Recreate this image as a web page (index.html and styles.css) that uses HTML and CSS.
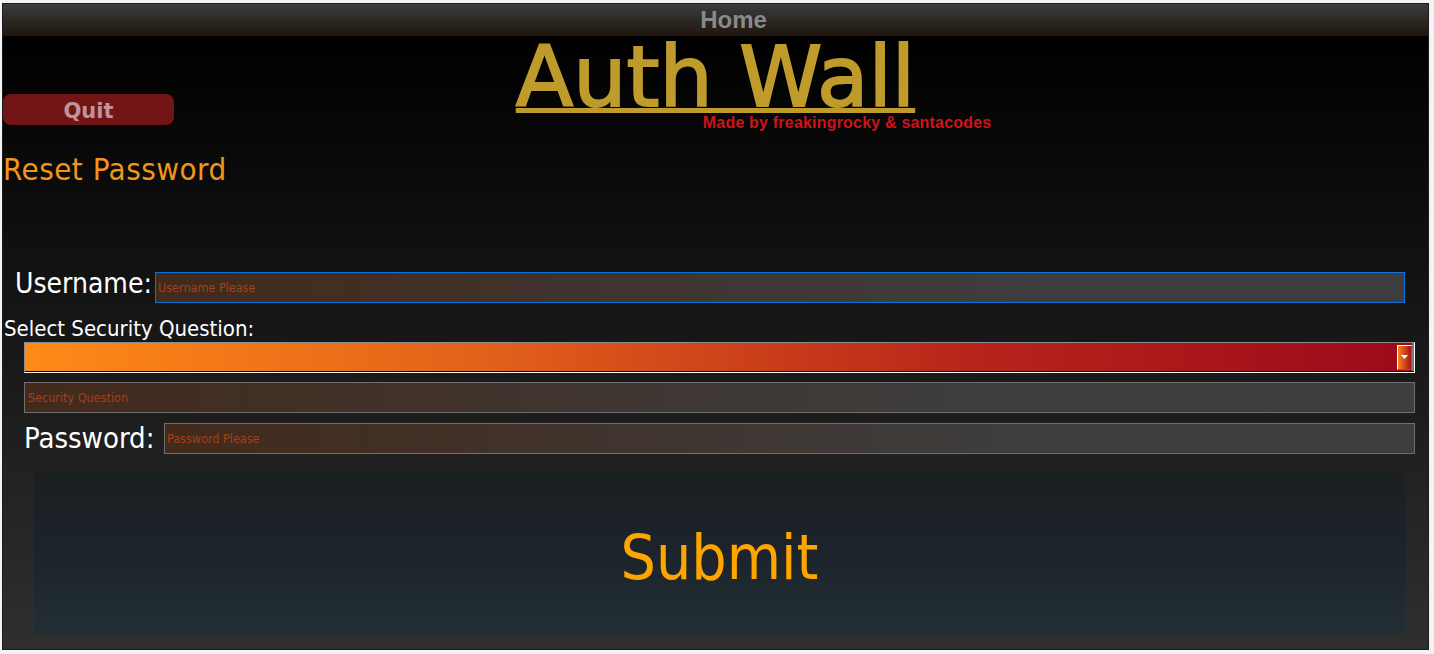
FILE: index.html
```html
<!DOCTYPE html>
<html lang="en">
<head>
<meta charset="utf-8">
<title>Auth Wall</title>
<link rel="stylesheet" href="styles.css">
</head>
<body>
<div class="window">
  <header class="titlebar">Home</header>
  <main class="main">
    <div class="top">
      <button class="quit" type="button">Quit</button>
      <h1 class="title">Auth Wall</h1>
      <p class="credit">Made by freakingrocky &amp; santacodes</p>
    </div>
    <h2 class="heading">Reset Password</h2>
    <form class="form">
      <div class="row row-user">
        <label class="label" for="user">Username:</label>
        <input id="user" class="field field-focus" placeholder="Username Please">
      </div>
      <label class="select-label">Select Security Question:</label>
      <div class="combo">
        <div class="combo-btn">
          <svg width="7" height="5" viewBox="0 0 7 5"><polygon points="0,0 7,0 3.5,4" fill="#fff"/></svg>
        </div>
      </div>
      <input class="field field-sq" placeholder="Security Question">
      <div class="row row-pass">
        <label class="label" for="pass">Password:</label>
        <input id="pass" class="field" type="password" placeholder="Password Please">
      </div>
      <button class="submit" type="button">Submit</button>
    </form>
  </main>
</div>
</body>
</html>
```

FILE: styles.css
```css
html, body {
  margin: 0;
}
body {
  background: #f3f3f3;
  padding: 3px 0 0 2px;
  height: 654px;
  box-sizing: border-box;
  overflow: hidden;
}
.window {
  width: 1427px;
  height: 647px;
  box-sizing: border-box;
  border: 1px solid #1c1c1c;
  display: flex;
  flex-direction: column;
}
.titlebar {
  flex: none;
  height: 32px;
  background: linear-gradient(#3c3c3c, #1f150d);
  text-align: center;
  padding-left: 36px;
  font: bold 24px/32px "Liberation Sans", Arial, sans-serif;
  color: #8a8a8a;
}
.main {
  flex: 1;
  background: linear-gradient(#000000, #2f2f2f);
  display: flex;
  flex-direction: column;
  font-family: "DejaVu Sans Condensed", "DejaVu Sans", sans-serif;
  font-stretch: condensed;
}
.top {
  display: grid;
  grid-template-columns: 1fr auto 1fr;
}
.quit {
  grid-column: 1;
  grid-row: 1 / span 2;
  justify-self: start;
  align-self: start;
  margin-top: 58px;
  width: 171px;
  height: 31px;
  padding: 0;
  border: 0;
  border-radius: 8px;
  background: #731515;
  color: #c0939a;
  font: bold 21px/34px "DejaVu Sans", sans-serif;
}
.title {
  grid-column: 2;
  grid-row: 1;
  margin: 3px 0 0;
  font: normal 84px/76px "DejaVu Sans", sans-serif;
  color: #bf9b2b;
  -webkit-text-stroke: 2px #bf9b2b;
  text-decoration: underline;
  text-decoration-thickness: 5px;
  text-underline-offset: 2px;
}
.credit {
  grid-column: 2 / 4;
  grid-row: 2;
  margin: -1px 0 0;
  padding-left: 187px;
  font: bold 16px/18px "Liberation Sans", Arial, sans-serif;
  color: #cc1418;
  white-space: nowrap;
  letter-spacing: 0.2px;
}
.heading {
  margin: 20px 0 0;
  font-size: 31px;
  line-height: 34px;
  letter-spacing: 0.5px;
  font-weight: normal;
  color: #f3951a;
}
.form {
  display: flex;
  flex-direction: column;
  margin-top: 86px;
}
.row {
  display: flex;
}
.label {
  flex: none;
  width: 140px;
  color: #ffffff;
  font-size: 28px;
}
.row-user {
  align-items: flex-start;
  padding-left: 12px;
  margin-right: 23px;
}
.row-user .label {
  line-height: 23px;
}
.row-pass {
  align-items: center;
  margin: 9px 13px 0 21px;
}
.row-pass .label {
  line-height: 32px;
  font-size: 29px;
}
.field {
  flex: 1;
  min-width: 0;
  box-sizing: border-box;
  height: 31px;
  margin: 0;
  padding: 0 2px;
  border: 1px solid #6f6f6f;
  background: linear-gradient(to right, #432a1b 0%, #3f3530 40%, #3e3e3e 70%);
  font-family: "DejaVu Sans Condensed", "DejaVu Sans", sans-serif;
  font-stretch: condensed;
  font-size: 12.5px;
  color: #dddddd;
  outline: none;
}
.field::placeholder {
  color: #a3411b;
  opacity: 1;
}
.field-focus {
  border-color: #0a74da;
}
.field-sq {
  flex: none;
  margin: 9px 13px 0 21px;
  padding-left: 3px;
}
.select-label {
  margin-top: 13px;
  padding-left: 1px;
  font-size: 22px;
  line-height: 25px;
  color: #ffffff;
}
.combo {
  margin: 1px 13px 0 21px;
  height: 31px;
  box-sizing: border-box;
  display: flex;
  justify-content: flex-end;
  align-items: center;
  padding: 0 2px 1px 0;
  border: 1px solid;
  border-color: #8c8c8c #ffffff #ffffff #8c8c8c;
  background: linear-gradient(to right, #ff8a17 0%, #e2611a 33%, #b8241a 68%, #9b0a1a 100%);
  box-shadow: inset 0 -1px 0 #000000, inset -2px 0 0 #7a7a7a;
}
.combo-btn {
  width: 13px;
  height: 23px;
  border: 1px solid;
  border-color: #ffffff #6a6a6a #6a6a6a #ffffff;
  background: linear-gradient(to right, #f7851a, #a8101a);
  display: flex;
  align-items: center;
  justify-content: center;
}
.submit {
  flex: none;
  margin: 19px 23px 0 31px;
  height: 161px;
  padding: 7px 0 0;
  border: 0;
  background: linear-gradient(#1a1f21, #1c232a 45%, #222e35);
  color: #ffa500;
  font-family: "DejaVu Sans Condensed", "DejaVu Sans", sans-serif;
  font-stretch: condensed;
  font-size: 62px;
}
```
